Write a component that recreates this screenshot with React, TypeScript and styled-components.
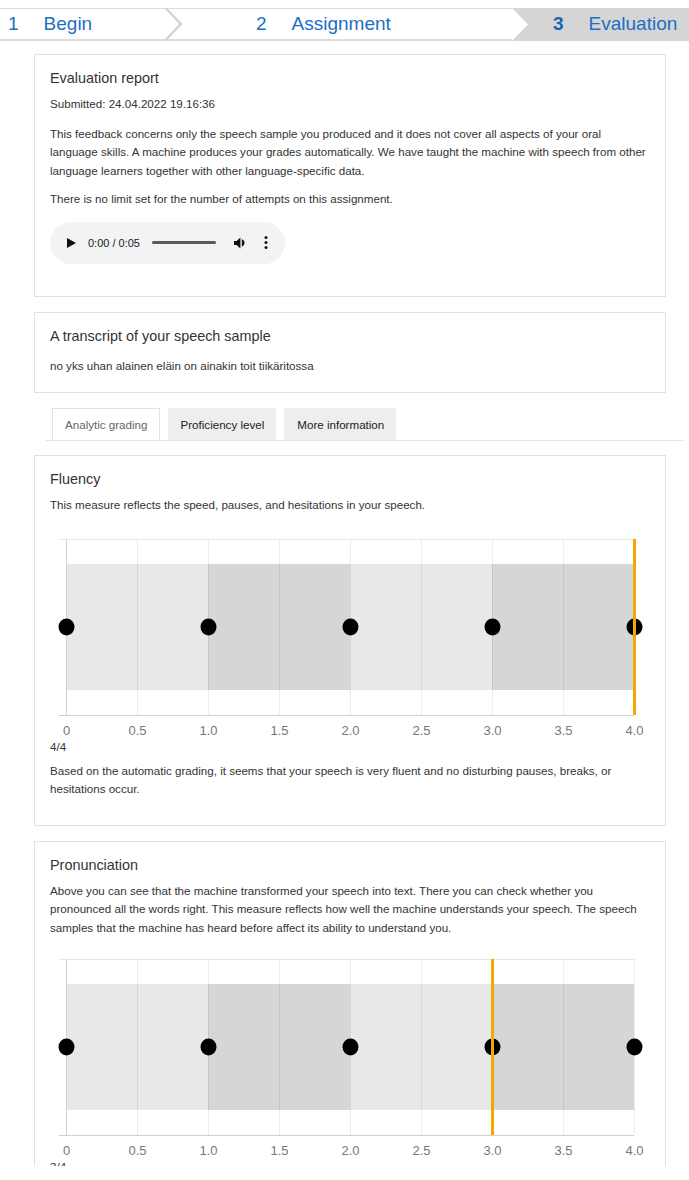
import React from 'react';
import styled, { createGlobalStyle } from 'styled-components';

const GlobalStyle = createGlobalStyle`
  html, body {
    margin: 0;
    padding: 0;
    background: #ffffff;
    font-family: "Liberation Sans", Arial, sans-serif;
    color: #333333;
  }
`;

const Viewport = styled.div`
  height: 1166px;
  overflow: hidden;
`;

/* ---------- stepper ---------- */

const Stepper = styled.div`
  display: flex;
  margin-top: 8px;
  height: 33px;
`;

const Step = styled.div<{ $active?: boolean; $width?: number; $pad: number }>`
  box-sizing: border-box;
  display: flex;
  align-items: center;
  height: 33px;
  padding-left: ${p => p.$pad}px;
  ${p => (p.$width ? `width: ${p.$width}px;` : 'flex: 1;')}
  border-top: 1px solid ${p => (p.$active ? '#d5d5d5' : '#dedede')};
  border-bottom: 2px solid ${p => (p.$active ? '#d5d5d5' : '#dedede')};
  background: ${p => (p.$active ? '#d5d5d5' : '#ffffff')};
  font-size: 19px;
  color: #1d6fc3;
  white-space: nowrap;
`;

const StepNum = styled.span<{ $active?: boolean }>`
  font-weight: ${p => (p.$active ? 700 : 400)};
  color: ${p => (p.$active ? '#1763b6' : '#1d6fc3')};
  margin-right: 25px;
`;

const Separator: React.FC<{ intoActive?: boolean }> = ({ intoActive }) =>
  intoActive ? (
    <svg width="16" height="33" style={{ display: 'block', flex: 'none' }}>
      <rect x="0" y="0" width="16" height="33" fill="#d5d5d5" />
      <polygon points="0,0 16,16.5 0,33" fill="#ffffff" />
      <line x1="0" y1="0.5" x2="1" y2="0.5" stroke="#dedede" />
    </svg>
  ) : (
    <svg width="17" height="33" style={{ display: 'block', flex: 'none' }}>
      <rect x="0" y="0" width="17" height="1" fill="#dedede" />
      <rect x="0" y="31" width="17" height="2" fill="#dedede" />
      <polyline points="0.5,0 16,16 0.5,32" fill="none" stroke="#cfcfcf" strokeWidth="2" />
    </svg>
  );

/* ---------- page ---------- */

const Main = styled.div`
  padding: 13px 23px 0 34px;
`;

const Card = styled.section<{ $padBottom?: number }>`
  border: 1px solid #e2e2e2;
  background: #ffffff;
  padding: 14px 15px ${p => p.$padBottom ?? 14}px;
  margin-bottom: 15px;
`;

const Title = styled.h2`
  margin: 0;
  font-size: 14.4px;
  font-weight: 400;
  line-height: 18px;
  color: #333333;
`;

const Text = styled.p<{ $top?: number }>`
  margin: ${p => p.$top ?? 0}px 0 0;
  font-size: 11.6px;
  line-height: 18.5px;
  color: #333333;
`;

const Score = styled.div`
  font-size: 11.6px;
  line-height: 18px;
  color: #333333;
`;

/* ---------- audio ---------- */

const Player = styled.div`
  display: flex;
  align-items: center;
  box-sizing: border-box;
  width: 235px;
  height: 42px;
  margin: 13px 0 18px;
  padding-left: 17px;
  border-radius: 21px;
  background: #f1f3f4;
`;

const Time = styled.span`
  margin-left: 12px;
  font-size: 11px;
  color: #202020;
`;

const Progress = styled.div`
  margin-left: 12px;
  width: 64px;
  height: 3px;
  border-radius: 2px;
  background: #5b5b5b;
`;

const AudioPlayer: React.FC = () => (
  <Player>
    <svg width="9" height="10" viewBox="0 0 9 10">
      <polygon points="0,0 9,5 0,10" fill="#111" />
    </svg>
    <Time>0:00 / 0:05</Time>
    <Progress />
    <svg width="13" height="12" viewBox="0 0 13 12" style={{ marginLeft: 18 }}>
      <path d="M0 4h2.6L6.4 0.4v11.2L2.6 8H0z" fill="#111" />
      <path d="M7.8 2.2a4 4 0 0 1 0 7.6z" fill="#111" />
    </svg>
    <svg width="4" height="13" viewBox="0 0 4 13" style={{ marginLeft: 17 }}>
      <circle cx="2" cy="1.6" r="1.5" fill="#111" />
      <circle cx="2" cy="6.5" r="1.5" fill="#111" />
      <circle cx="2" cy="11.4" r="1.5" fill="#111" />
    </svg>
  </Player>
);

/* ---------- tabs ---------- */

const TabBar = styled.nav`
  display: flex;
  gap: 8px;
  margin: 0 -17px 14px 12px;
  padding-left: 6px;
  border-bottom: 1px solid #e4e4e4;
`;

const Tab = styled.div<{ $active?: boolean }>`
  box-sizing: border-box;
  display: flex;
  align-items: center;
  height: 32px;
  padding: 0 11px 0 12px;
  font-size: 11.6px;
  background: ${p => (p.$active ? '#ffffff' : '#eeeeee')};
  color: ${p => (p.$active ? '#666666' : '#222222')};
  border: 1px solid ${p => (p.$active ? '#e2e2e2' : '#eeeeee')};
  border-bottom: none;
`;

/* ---------- chart ---------- */

const ChartBox = styled.div<{ $top: number }>`
  margin-top: ${p => p.$top}px;
  height: 199px;
`;

const X = (v: number) => 16 + v * 142;

const ScoreChart: React.FC<{ value: number; top: number }> = ({ value, top }) => {
  const ticks = [0, 0.5, 1, 1.5, 2, 2.5, 3, 3.5, 4];
  const bands = [
    { from: 0, to: 1, fill: '#e8e8e8' },
    { from: 1, to: 2, fill: '#d6d6d6' },
    { from: 2, to: 3, fill: '#e8e8e8' },
    { from: 3, to: 4, fill: '#d6d6d6' },
  ];
  return (
    <ChartBox $top={top}>
      <svg width="600" height="199" style={{ display: 'block' }}>
        <line x1="9" y1="0.5" x2="584" y2="0.5" stroke="#e6e6e6" />
        {bands.map(b => (
          <rect key={b.from} x={X(b.from)} y="25" width={X(b.to) - X(b.from)} height="126" fill={b.fill} />
        ))}
        {ticks.map(t => (
          <line key={t} x1={X(t) + 0.5} y1="0" x2={X(t) + 0.5} y2="176" stroke="rgba(0,0,0,0.07)" />
        ))}
        <line x1="16.5" y1="0" x2="16.5" y2="176" stroke="#d2d2d2" />
        <line x1="9" y1="176.5" x2="584" y2="176.5" stroke="#d0d0d0" />
        {[0, 1, 2, 3, 4].map(d => (
          <ellipse key={d} cx={X(d) + 0.5} cy="88" rx="8" ry="8.5" fill="#000" />
        ))}
        <rect x={X(value) - 1} y="0" width="3" height="176" fill="#f5a700" />
        {ticks.map(t => (
          <text
            key={t}
            x={X(t) + 0.5}
            y="196"
            textAnchor="middle"
            fontSize="13"
            fill="#777777"
            fontFamily='"Liberation Sans", Arial, sans-serif'
          >
            {t === 0 ? '0' : t.toFixed(1)}
          </text>
        ))}
      </svg>
    </ChartBox>
  );
};

/* ---------- app ---------- */

export default function App() {
  return (
    <Viewport>
      <GlobalStyle />
      <Stepper>
        <Step $width={165} $pad={8}>
          <StepNum>1</StepNum>Begin
        </Step>
        <Separator />
        <Step $width={330} $pad={74}>
          <StepNum>2</StepNum>Assignment
        </Step>
        <Separator intoActive />
        <Step $active $pad={25}>
          <StepNum $active>3</StepNum>Evaluation
        </Step>
      </Stepper>

      <Main>
        <Card $padBottom={14}>
          <Title>Evaluation report</Title>
          <Text $top={8}>Submitted: 24.04.2022 19.16:36</Text>
          <Text $top={11}>
            This feedback concerns only the speech sample you produced and it does not cover all aspects of your oral
            language skills. A machine produces your grades automatically. We have taught the machine with speech from
            other language learners together with other language-specific data.
          </Text>
          <Text $top={10}>There is no limit set for the number of attempts on this assignment.</Text>
          <AudioPlayer />
        </Card>

        <Card $padBottom={17}>
          <Title>A transcript of your speech sample</Title>
          <Text $top={12}>no yks uhan alainen eläin on ainakin toit tiikäritossa</Text>
        </Card>

        <TabBar>
          <Tab $active>Analytic grading</Tab>
          <Tab>Proficiency level</Tab>
          <Tab>More information</Tab>
        </TabBar>

        <Card $padBottom={26}>
          <Title>Fluency</Title>
          <Text $top={8}>This measure reflects the speed, pauses, and hesitations in your speech.</Text>
          <ScoreChart value={4} top={24} />
          <Score>4/4</Score>
          <Text $top={6}>
            Based on the automatic grading, it seems that your speech is very fluent and no disturbing pauses, breaks,
            or hesitations occur.
          </Text>
        </Card>

        <Card $padBottom={26}>
          <Title>Pronunciation</Title>
          <Text $top={8}>
            Above you can see that the machine transformed your speech into text. There you can check whether you
            pronounced all the words right. This measure reflects how well the machine understands your speech. The
            speech samples that the machine has heard before affect its ability to understand you.
          </Text>
          <ScoreChart value={3} top={22} />
          <Score>3/4</Score>
        </Card>
      </Main>
    </Viewport>
  );
}
